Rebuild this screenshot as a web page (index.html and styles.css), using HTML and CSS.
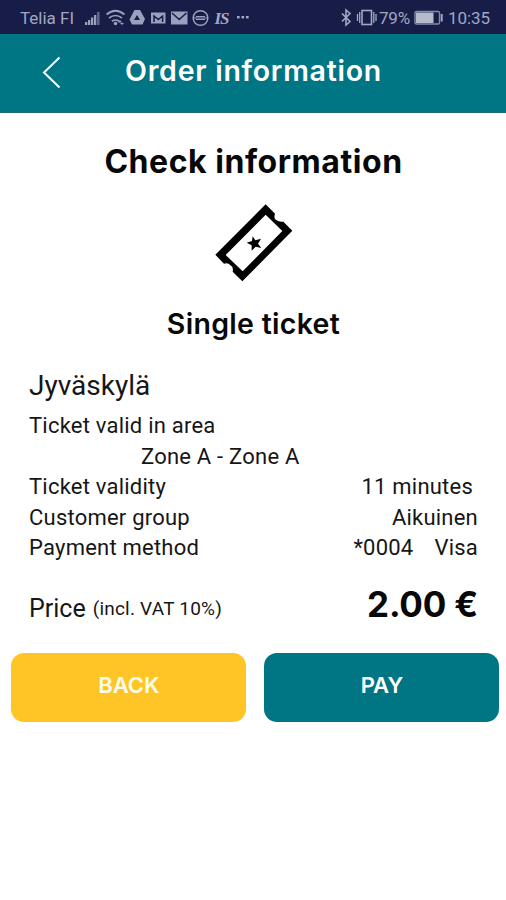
FILE: index.html
```html
<!DOCTYPE html>
<html lang="en">
<head>
<meta charset="utf-8">
<title>Order information</title>
<link rel="stylesheet" href="styles.css">
</head>
<body>
<div class="status">
  <span class="carrier">Telia FI</span>
  <svg class="tray" width="170" height="34" viewBox="80 0 170 34" fill="none">
    <g fill="#9aa1bf">
      <path d="M85 22h2.300v3H85zM88 20h2.300v5H88zM91 17.500h2.300V25H91zM94 15h2.300v10H94z"/>
      <path d="M97 12h2.600v13H97z" opacity=".55"/>
      <circle cx="115.500" cy="23.500" r="1.800"/>
      <path d="M120 20l2 2.500h-4zM122 25l-2-2h4z"/>
      <path fill-rule="evenodd" d="M134.500 10h5.500l5 9-2.500 5.500h-10.500l-2.500-5zM137 15l-3 5h6z"/>
      <path d="M151 12.500h14.500v11H151z"/>
      <path d="M171 11.500h16.500v13H171z"/>
    </g>
    <g stroke="#9aa1bf" stroke-width="1.700">
      <path d="M106.500 14.500q9-7.500 18 0M109 18q6.500-5 13 0M112 21.300q3.500-2.600 7 0"/>
      <circle cx="200.500" cy="18" r="7.300" stroke-width="1.500"/>
      <path d="M193.500 18h14M196 16.500h9M196 19.500h9" stroke-width="1"/>
    </g>
    <path d="M154 22v-6l4.300 3.500 4.300-3.500v6M172 13l7.200 6.500 7.200-6.500" stroke="#171d46" stroke-width="1.500"/>
    <g fill="#a4aac6"><rect x="237" y="16" width="2.600" height="2.400"/><rect x="241.500" y="16" width="2.600" height="2.400"/><rect x="246" y="16" width="2.600" height="2.400"/></g>
    <text class="is" x="214.500" y="24">IS</text>
  </svg>
  <svg class="radio" width="38" height="34" viewBox="340 0 38 34" fill="none" stroke="#a1a7c4" stroke-width="1.600">
    <path d="M342 13.500l8 8-4 3.500V10l4 3.500-8 8"/>
    <rect x="362" y="10.500" width="9.500" height="14"/>
    <path d="M359.700 12v11M357.500 14v7M373.800 12v11M376 14v7" stroke-width="1.300"/>
  </svg>
  <span class="percent">79%</span>
  <svg class="battery" width="30" height="34" viewBox="414 0 30 34" fill="none">
    <rect x="415" y="11.500" width="24.500" height="12.500" rx="1.500" stroke="#838aad" stroke-width="1.400"/>
    <path d="M416 12.500h17.500v10.500H416z" fill="#b5bacd"/>
    <path d="M441.700 14v7.500" stroke="#a1a7c4" stroke-width="2"/>
  </svg>
  <span class="clock">10:35</span>
</div>
<header class="bar">
  <svg class="chevron" width="20" height="36" viewBox="0 0 20 36"><path d="M18.500 3.500L3 18.500l15.500 15" fill="none" stroke="#fff" stroke-width="2"/></svg>
  <h1>Order information</h1>
</header>
<main>
  <h2>Check information</h2>
  <svg class="ticket" width="100" height="95" viewBox="0 0 300 285">
    <path fill-rule="evenodd" d="M182 28L210 56Q205 72 214 75Q222 82 235 80L262 107L112 259L83 230Q86 215 76 211Q70 202 57 206L31 179ZM182 59L62 180L113 229L232 108Z"/>
    <path d="M143 124l8 12 17-5-9 15 10 13-17-4-12 12v-16l-15-8 16-5z"/>
  </svg>
  <h3>Single ticket</h3>
  <section class="details">
    <p class="city">Jyväskylä</p>
    <div class="row"><span>Ticket valid in area</span></div>
    <div class="row zone"><span>Zone A - Zone A</span></div>
    <div class="row"><span>Ticket validity</span><span class="minutes">11 minutes</span></div>
    <div class="row"><span>Customer group</span><span>Aikuinen</span></div>
    <div class="row"><span>Payment method</span><span class="card"><span>*0004</span><span>Visa</span></span></div>
    <div class="total">
      <span class="price">Price</span><span class="vat">(incl. VAT 10%)</span><strong>2.00 €</strong>
    </div>
  </section>
  <div class="actions">
    <button class="back" type="button">BACK</button>
    <button class="pay" type="button">PAY</button>
  </div>
</main>
</body>
</html>
```
FILE: styles.css
```css
* { box-sizing: border-box; }
body { margin: 0; width: 506px; height: 900px; overflow: hidden; background: #fff; color: #161616; font-family: Roboto, "Liberation Sans", sans-serif; }
h1, h2, h3, p { margin: 0; white-space: nowrap; }
svg { display: block; flex: none; }
.status { height: 34px; display: flex; align-items: center; padding-left: 20px; background: #171d46; color: #a1a7c4; font-size: 17px; line-height: 34px; white-space: nowrap; }
.carrier { width: 60px; padding-top: 2px; letter-spacing: 0; }
.is { font: italic bold 17px "Liberation Serif", serif; fill: #a4aac6; letter-spacing: -1px; }
.radio { margin-left: 90px; }
.percent { width: 36px; margin-left: 1px; padding-top: 2px; letter-spacing: -.2px; }
.battery { margin-left: -1px; }
.clock { margin-left: 4px; padding-top: 2px; letter-spacing: -.1px; }
.bar { height: 79px; display: flex; align-items: center; padding-left: 41px; background: #007685; border-bottom: 1px solid #236a77; }
.chevron { margin-top: -2px; }
h1 { margin: -4px 0 0 64px; color: #fff; font: 600 28.5px/34px Inter, sans-serif; letter-spacing: .75px; }
main { display: flex; flex-direction: column; }
h2 { margin-top: 29px; padding-left: 1px; color: #080808; text-align: center; font: 700 32px/40px Inter, sans-serif; letter-spacing: .55px; }
.ticket { margin: 13px 0 0 205px; }
h3 { margin-top: 15px; padding-left: 1px; color: #080808; text-align: center; font: 600 28.5px/38px Inter, sans-serif; letter-spacing: .3px; }
.details { padding: 25px 28px 0 29px; font-size: 22px; }
.city { height: 43px; font-size: 28px; line-height: 36px; letter-spacing: 0; }
.row { height: 30.6px; line-height: 30.6px; display: flex; justify-content: space-between; white-space: nowrap; letter-spacing: .22px; }
.zone { padding-left: 112px; }
.minutes { margin-right: 5px; }
.card { display: flex; gap: 21px; }
.total { height: 83px; display: flex; align-items: baseline; padding-top: 16px; white-space: nowrap; }
.price { font-size: 25px; letter-spacing: 0; }
.vat { margin: 5px 0 0 7px; align-self: flex-start; font-size: 19px; line-height: 48px; letter-spacing: .22px; }
strong { margin-left: auto; color: #080808; font: 700 35px/48px Inter, sans-serif; letter-spacing: -.2px; }
.actions { display: grid; grid-template-columns: 235px 235px; gap: 18px; padding-left: 11.4px; margin-top: 6px; }
button { height: 69px; border: 0; border-radius: 13px; padding: 0 0 4px; color: #fff; font: 600 22px/28px Inter, sans-serif; }
.back { background: #ffc526; color: #fffdf0; }
.pay { background: #007685; }
```
